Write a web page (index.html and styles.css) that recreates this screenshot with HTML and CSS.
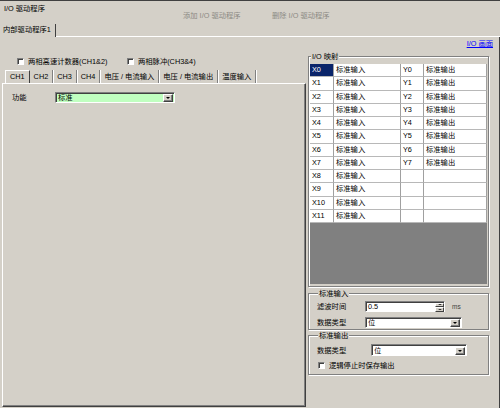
FILE: index.html
```html
<!DOCTYPE html>
<html lang="zh">
<head>
<meta charset="utf-8">
<link rel="stylesheet" href="styles.css">
</head>
<body>
<div class="window">
  <div class="header">
    <div class="title">I/O 驱动程序</div>
    <div class="hbtn add">添加 I/O 驱动程序</div>
    <div class="hbtn del">删除 I/O 驱动程序</div>
  </div>
  <div class="drvtabs">
    <div class="drvtab">内部驱动程序1</div>
    <div class="drvline"></div>
  </div>
  <div class="main">
    <div class="left">
      <div class="checks">
        <label class="chk first"><span class="box"></span>两相高速计数器(CH1&amp;2)</label>
        <label class="chk"><span class="box"></span>两相脉冲(CH3&amp;4)</label>
      </div>
      <div class="chtabs">
        <div class="chtab sel">CH1</div>
        <div class="chtab">CH2</div>
        <div class="chtab">CH3</div>
        <div class="chtab">CH4</div>
        <div class="chtab">电压 / 电流输入</div>
        <div class="chtab">电压 / 电流输出</div>
        <div class="chtab">温度输入</div>
      </div>
      <div class="chpanel">
        <div class="frow">
          <span class="flabel">功能</span>
          <div class="combo green w-func"><span class="ctext">标准</span><span class="dropbtn"><span class="tri"></span></span></div>
        </div>
      </div>
    </div>
    <div class="right">
      <div class="linkrow"><a class="link">I/O 画面</a></div>
      <fieldset class="group iogroup">
        <legend>I/O 映射</legend>
        <div class="iotable">
          <div class="iorow"><span class="cell selcell">X0</span><span class="cell">标准输入</span><span class="cell">Y0</span><span class="cell">标准输出</span></div>
          <div class="iorow"><span class="cell">X1</span><span class="cell">标准输入</span><span class="cell">Y1</span><span class="cell">标准输出</span></div>
          <div class="iorow"><span class="cell">X2</span><span class="cell">标准输入</span><span class="cell">Y2</span><span class="cell">标准输出</span></div>
          <div class="iorow"><span class="cell">X3</span><span class="cell">标准输入</span><span class="cell">Y3</span><span class="cell">标准输出</span></div>
          <div class="iorow"><span class="cell">X4</span><span class="cell">标准输入</span><span class="cell">Y4</span><span class="cell">标准输出</span></div>
          <div class="iorow"><span class="cell">X5</span><span class="cell">标准输入</span><span class="cell">Y5</span><span class="cell">标准输出</span></div>
          <div class="iorow"><span class="cell">X6</span><span class="cell">标准输入</span><span class="cell">Y6</span><span class="cell">标准输出</span></div>
          <div class="iorow"><span class="cell">X7</span><span class="cell">标准输入</span><span class="cell">Y7</span><span class="cell">标准输出</span></div>
          <div class="iorow"><span class="cell">X8</span><span class="cell">标准输入</span><span class="cell"></span><span class="cell"></span></div>
          <div class="iorow"><span class="cell">X9</span><span class="cell">标准输入</span><span class="cell"></span><span class="cell"></span></div>
          <div class="iorow"><span class="cell">X10</span><span class="cell">标准输入</span><span class="cell"></span><span class="cell"></span></div>
          <div class="iorow"><span class="cell">X11</span><span class="cell">标准输入</span><span class="cell"></span><span class="cell"></span></div>
          <div class="iofill"></div>
        </div>
      </fieldset>
      <fieldset class="group stdin">
        <legend>标准输入</legend>
        <div class="frow">
          <span class="glabel">滤波时间</span>
          <div class="spin"><span class="ctext">0.5</span><span class="spinbtns"><span class="sbtn"><span class="tri up"></span></span><span class="sbtn"><span class="tri"></span></span></span></div>
          <span class="unit">ms</span>
        </div>
        <div class="frow gap">
          <span class="glabel">数据类型</span>
          <div class="combo w-in"><span class="ctext">位</span><span class="dropbtn"><span class="tri"></span></span></div>
        </div>
      </fieldset>
      <fieldset class="group stdout">
        <legend>标准输出</legend>
        <div class="frow">
          <span class="glabel wide">数据类型</span>
          <div class="combo w-out"><span class="ctext">位</span><span class="dropbtn"><span class="tri"></span></span></div>
        </div>
        <label class="chk keep"><span class="box"></span>逻辑停止时保存输出</label>
      </fieldset>
    </div>
  </div>
</div>
</body>
</html>
```
FILE: styles.css
```css
* { box-sizing: border-box; }
html, body { margin: 0; padding: 0; }
body {
  width: 500px;
  height: 408px;
  background: #d4d0c8;
  font-family: "Liberation Sans", "Noto Sans CJK SC", sans-serif;
  font-size: 7.3px;
  color: #000;
  overflow: hidden;
}
.window {
  width: 500px;
  height: 408px;
  border-top: 1px solid #404040;
  display: flex;
  flex-direction: column;
}
.header { height: 23px; display: flex; align-items: flex-start; flex: none; }
.title { width: 183px; padding-left: 4px; margin-top: 3px; line-height: 9px; }
.hbtn { color: #8c8a84; margin-top: 10px; line-height: 9px; }
.hbtn.add { width: 89px; }

.drvtabs { height: 13px; display: flex; flex: none; }
.drvtab {
  height: 13px;
  padding: 0 4px 0 3px;
  line-height: 12px;
  border-right: 1px solid #404040;
  white-space: nowrap;
}
.drvline { flex: 1; border-bottom: 1px solid #fff; }

.main { flex: 1; display: flex; min-height: 0; }
.left { width: 306px; padding-left: 2px; display: flex; flex-direction: column; flex: none; }
.checks { margin-top: 19px; height: 10px; display: flex; align-items: center; padding-left: 15px; }
.chk { display: flex; align-items: center; gap: 4px; white-space: nowrap; line-height: 9px; }
.chk.first { width: 110px; }
.box {
  width: 7px; height: 7px;
  background: #fff;
  border: 1px solid;
  border-color: #808080 #fff #fff #808080;
  box-shadow: inset 1px 1px 0 #404040;
  flex: none;
}
.chtabs { margin-top: 4px; height: 13px; display: flex; padding-left: 3px; flex: none; }
.chtab {
  padding: 0 4px;
  line-height: 13px;
  white-space: nowrap;
  border-right: 1px solid #808080;
  box-shadow: 1px 0 0 #fff;
}
.chtab.sel {
  border-top: 1px solid #fff;
  border-left: 1px solid #fff;
  border-right: 1px solid #404040;
  line-height: 12px;
  box-shadow: none;
}
.chpanel {
  height: 324px;
  flex: none;
  border-top: 1px solid #fff;
  border-left: 1px solid #fff;
  border-right: 1px solid #404040;
  border-bottom: 1px solid #404040;
  box-shadow: inset -1px -1px 0 #808080;
  padding: 8px 0 0 9px;
}
.frow { display: flex; align-items: center; height: 11px; }
.flabel { width: 43px; line-height: 9px; }

.combo, .spin {
  height: 11px;
  background: #fff;
  border: 1px solid;
  border-color: #808080 #fff #fff #808080;
  box-shadow: inset 1px 1px 0 #404040;
  display: flex;
  align-items: center;
  justify-content: space-between;
  padding: 1px 1px 0 2px;
}
.combo.green { background: #c0ffc0; }
.w-func { width: 120px; }
.w-in { width: 97px; }
.w-out { width: 96px; height: 12px; }
.ctext { line-height: 8px; }
.dropbtn {
  width: 10px; height: 8px;
  background: #d4d0c8;
  border: 1px solid;
  border-color: #fff #404040 #404040 #fff;
  box-shadow: inset -1px -1px 0 #808080;
  display: flex; align-items: center; justify-content: center;
}
.tri {
  width: 0; height: 0;
  border-left: 2.5px solid transparent;
  border-right: 2.5px solid transparent;
  border-top: 2.5px solid #000;
}
.tri.up { border-top: none; border-bottom: 2.5px solid #000; }

.right {
  width: 194px;
  flex: none;
  border-right: 1px solid #404040;
  padding-left: 2px;
  display: flex;
  flex-direction: column;
}
.linkrow { margin-top: 2px; line-height: 9px; text-align: right; padding-right: 6px; }
.link { color: #0000ff; text-decoration: underline; }

.group {
  margin: 0;
  width: 181px;
  min-width: 0;
  border: 1px solid #808080;
  box-shadow: inset 1px 1px 0 #fff, 1px 1px 0 #fff;
}
.group legend {
  padding: 0 1px;
  margin-left: 1px;
  line-height: 9px;
  background: #d4d0c8;
}
.iogroup { margin-top: 4px; padding: 3px 1px 2px 1px; }
.iotable { width: 177px; height: 220px; background: #808080; display: flex; flex-direction: column; }
.iorow {
  display: grid;
  grid-template-columns: 24px 67px 23px 63px;
  height: 13.25px;
  background: #fff;
  flex: none;
}
.cell {
  border-right: 1px solid #a0a0a0;
  border-bottom: 1px solid #b8b8b8;
  padding-left: 2px;
  line-height: 12px;
  white-space: nowrap;
  overflow: hidden;
}
.selcell { background: #0a246a; color: #fff; }
.iofill { flex: 1; }

.stdin { margin-top: 2px; padding: 3px 0 1px 8px; }
.glabel { width: 48px; line-height: 9px; }
.glabel.wide { width: 54px; }
.frow.gap { margin-top: 5px; }
.spin { width: 80px; padding-right: 0; }
.spinbtns { display: flex; flex-direction: column; height: 9px; width: 9px; }
.sbtn {
  flex: 1;
  background: #d4d0c8;
  border: 1px solid;
  border-color: #fff #404040 #404040 #fff;
  display: flex; align-items: center; justify-content: center;
}
.sbtn .tri { border-left-width: 2px; border-right-width: 2px; border-top-width: 1.5px; }
.sbtn .tri.up { border-bottom-width: 1.5px; }
.unit { margin-left: 7px; color: #404040; line-height: 9px; font-size: 6.5px; }

.stdout { margin-top: 1px; padding: 4px 0 4px 8px; }
.stdout .frow { height: 12px; }
.chk.keep { margin-top: 5px; margin-left: 1px; }
```
